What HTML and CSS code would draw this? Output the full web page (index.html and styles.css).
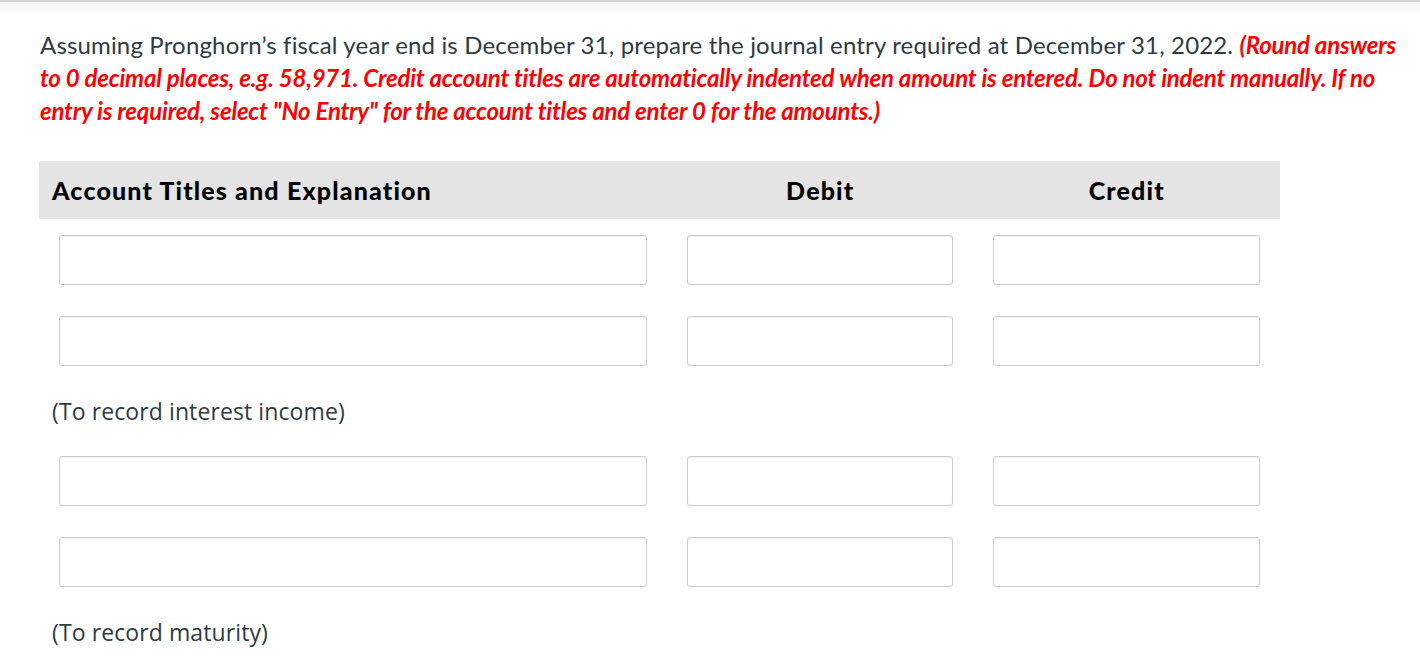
FILE: index.html
```html
<!DOCTYPE html>
<html lang="en">
<head>
    <meta charset="UTF-8">
    <meta name="viewport" content="width=device-width, initial-scale=1.0">
    <title>Journal Entry</title>
    <link rel="stylesheet" href="styles.css">
</head>
<body>

<div class="question">
    <p class="prompt">
        Assuming Pronghorn’s fiscal year end is December 31, prepare the journal entry required at December 31, 2022.
        <span class="hint">(Round answers to 0 decimal places, e.g. 58,971. Credit account titles are automatically indented when amount is entered. Do not indent manually. If no entry is required, select "No Entry" for the account titles and enter 0 for the amounts.)</span>
    </p>

    <table class="journal">
        <thead>
            <tr>
                <th class="col-title">Account Titles and Explanation</th>
                <th class="col-amount">Debit</th>
                <th class="col-amount">Credit</th>
            </tr>
        </thead>
        <tbody>
            <tr class="entry">
                <td><input type="text"></td>
                <td><input type="text"></td>
                <td><input type="text"></td>
            </tr>
            <tr class="entry">
                <td><input type="text"></td>
                <td><input type="text"></td>
                <td><input type="text"></td>
            </tr>
            <tr class="note">
                <td colspan="3">(To record interest income)</td>
            </tr>
            <tr class="entry">
                <td><input type="text"></td>
                <td><input type="text"></td>
                <td><input type="text"></td>
            </tr>
            <tr class="entry">
                <td><input type="text"></td>
                <td><input type="text"></td>
                <td><input type="text"></td>
            </tr>
            <tr class="note">
                <td colspan="3">(To record maturity)</td>
            </tr>
        </tbody>
    </table>
</div>

</body>
</html>
```

FILE: styles.css
```css
body {
    margin: 0;
    background-color: #ffffff;
    font-family: Lato, "Open Sans", sans-serif;
    color: #2d3b45;
    border-top: 2px solid #d4d4d4;
}
.question {
    padding: 26px 0 0 39px;
    background: linear-gradient(#f4f4f4, #ffffff 14px);
}
.prompt {
    margin: 0 0 34px 1px;
    font-size: 24px;
    line-height: 33px;
    letter-spacing: 0.16px;
    width: 1360px;
}
.hint {
    color: #ff0000;
    font-weight: bold;
    font-style: italic;
    letter-spacing: -0.2px;
}
.journal {
    width: 1241px;
    border-collapse: collapse;
    table-layout: fixed;
}
.journal th {
    background-color: #e4e4e4;
    color: #000;
    font-size: 25px;
    font-weight: 900;
    letter-spacing: 1.15px;
    height: 58px;
    padding: 0 13px;
    text-align: center;
}
.journal th.col-title {
    width: 601px;
    text-align: left;
}
.journal th.col-amount {
    width: 280px;
}
.entry td {
    padding: 16px 20px 15px;
}
.entry input {
    display: block;
    box-sizing: border-box;
    width: 100%;
    height: 50px;
    border: 1px solid #cccccc;
    border-radius: 3px;
    box-shadow: inset 0 1px 1px rgba(0, 0, 0, 0.06);
    font-size: 18px;
}
.note td {
    padding: 15px 13px 0;
    height: 44px;
    line-height: 31px;
    vertical-align: top;
    font-family: "Open Sans", sans-serif;
    font-size: 23px;
    letter-spacing: 0.1px;
    color: #2d3b45;
}
```
